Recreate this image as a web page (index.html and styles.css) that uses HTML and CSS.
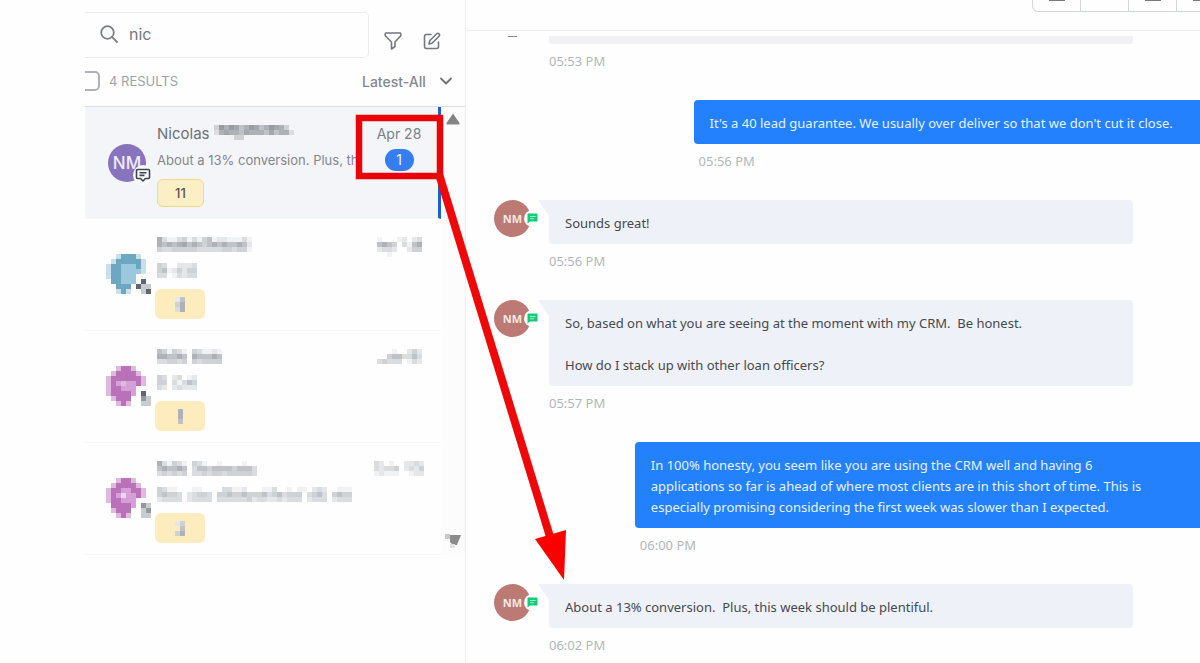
FILE: index.html
```
<!DOCTYPE html>
<html lang="en">
<head>
<meta charset="utf-8">
<title>Conversations</title>
<link rel="stylesheet" href="styles.css">
</head>
<body>
<div class="app">
  <aside class="sidebar">
    <div class="search-row">
      <label class="search">
        <svg width="20" height="20" viewBox="0 0 20 20" fill="none" stroke="#7c8084" stroke-width="1.8" stroke-linecap="round"><circle cx="8.5" cy="8.5" r="6.3"/><path d="M13.2 13.2L18 18"/></svg>
        <input type="text" value="nic" aria-label="Search conversations">
      </label>
      <button class="icon-btn" aria-label="Filter"><svg width="20" height="20" viewBox="0 0 20 20" fill="none" stroke="#74787c" stroke-width="1.6" stroke-linejoin="round"><path d="M2.5 2H17.5Q18.3 3.8 17.5 5L12 11V15.5L8.500 18V11L2.500 5Q1.700 3.800 2.500 2Z"/></svg></button>
      <button class="icon-btn" aria-label="New message"><svg width="20" height="20" viewBox="0 0 20 20" fill="none" stroke="#74787c" stroke-width="1.6" stroke-linejoin="round" stroke-linecap="round"><path d="M9 3.500H4.500Q2.500 3.500 2.500 5.500V15.500Q2.500 17.500 4.500 17.500H14.500Q16.500 17.500 16.500 15.500V11"/><path d="M7 13L7.700 9.800L14.700 2.800Q15.800 1.700 17 2.800Q18.200 4 17 5.200L10 12.200Z"/></svg></button>
    </div>
    <div class="results-row">
      <label class="select-all"><input type="checkbox"><span>4 RESULTS</span></label>
      <label class="sort">
        <select aria-label="Sort order"><option>Latest-All</option></select>
        <svg width="14" height="10" viewBox="0 0 14 10" fill="none" stroke="#6e7276" stroke-width="1.8" stroke-linecap="round" stroke-linejoin="round"><path d="M2 2.500L7 7.500L12 2.500"/></svg>
      </label>
    </div>
    <div class="list-area">
      <ul class="list">
        <li class="item item-active">
          <div class="avatar">NM
            <span class="avatar-badge"><svg width="16" height="15" viewBox="0 0 16 15" fill="none" stroke="#3c4450" stroke-width="1.600" stroke-linejoin="round"><path d="M2.500 1.500H13.500Q14.500 1.500 14.500 2.500V9.500Q14.500 10.500 13.500 10.500H10.500L8 13L5.500 10.500H2.500Q1.500 10.500 1.500 9.500V2.500Q1.500 1.500 2.500 1.500ZM4.500 4.700H11.500M4.500 7.400H9.500"/></svg></span>
          </div>
          <div class="item-body">
            <div class="name">Nicolas <span class="mosaic" data-map="4868756875687640|3676657666575663|0001440000000000"></span></div>
            <div class="preview">About a 13% conversion. Plus, thi</div>
            <span class="score">11</span>
          </div>
          <div class="item-meta"><time class="date">Apr 28</time><span class="unread">1</span></div>
        </li>
        <li class="item">
          <span class="mosaic face" data-map="..caaac..|.caaaaac.|caabbbac.|caabbbbc.|caabbb...|.aabbb.d.|..aaa.dgg|..cac..gd"></span>
          <div class="item-body">
            <div class="name"><span class="mosaic" data-map="63113413145122111310|65656756545656556520|43344444333334434410"></span></div>
            <div class="preview"><span class="mosaic" data-map="43002223|45124244|33013233"></span></div>
            <span class="score score-soft"><span class="mosaic" data-map="25|46|36"></span></span>
          </div>
          <div class="item-meta"><span class="mosaic" data-map="100012023|565403156|233200244|001000000"></span></div>
        </li>
        <li class="item">
          <span class="mosaic face" data-map="..rppr...|.rppppr..|rppppppr.|rpqrqqpr.|rppqqq...|rppppq.d.|.rppp..kg|..rpr..gg"></span>
          <div class="item-body">
            <div class="name"><span class="mosaic" data-map="5414310431121|6655650655565|3344340434444"></span></div>
            <div class="preview"><span class="mosaic" data-map="43023012|44031354|32023222"></span></div>
            <span class="score score-soft"><span class="mosaic" data-map="6|6|5"></span></span>
          </div>
          <div class="item-meta"><span class="mosaic" data-map="000100242|004553353|343330132"></span></div>
        </li>
        <li class="item">
          <span class="mosaic face" data-map="..rppr...|.rppppr..|rppqqppr.|rpqsqqpr.|rppqqq...|.ppppq.kg|.rppp..gk|..rpr..gg"></span>
          <div class="item-body">
            <div class="name"><span class="mosaic" data-map="63143104310010000100|56556503554555545553|34343403343443444443"></span></div>
            <div class="preview wide"><span class="mosaic" data-map="4311000110000331120001130010110232001110|4544302344304454454445345344403453045440|2333302333303333334233223233302333023330"></span></div>
            <span class="score score-soft"><span class="mosaic" data-map="24|05|46"></span></span>
          </div>
          <div class="item-meta"><span class="mosaic" data-map="3201002232|3233402324|1211100122"></span></div>
        </li>
      </ul>
      <div class="scrollbar">
        <svg width="16" height="12" viewBox="0 0 16 12"><path d="M8 0.500L14.500 10Q15 11.500 13.500 11.500H2.500Q1 11.500 1.500 10Z" fill="#858585"/></svg>
        <svg width="18" height="16" viewBox="0 0 18 16"><path d="M1 1H6V6H1Z" fill="#c9c9c9"/><path d="M6 2H17L13 12H9L6 9Z" fill="#8b8b8b"/><path d="M6 11H11V15H6Z" fill="#e2e2e2"/></svg>
      </div>
    </div>
  </aside>

  <main class="chat">
    <header class="chat-head">
      <div class="tools">
        <button aria-label="Archive"><i></i></button><button aria-label="Star"></button><button aria-label="Delete"><i></i></button><button aria-label="More"><i></i></button>
      </div>
    </header>
    <section class="messages">
      <article class="received">
        <div class="avatar-edge"></div>
        <div class="msg"><div class="bubble bubble-cut"></div><time>05:53 PM</time></div>
      </article>
      <article class="sent sent-short"><p class="bubble">It's a 40 lead guarantee. We usually over deliver so that we don't cut it close.</p><time>05:56 PM</time></article>
      <article class="received">
        <div class="sender">NM<span class="sms"><svg width="11" height="11" viewBox="0 0 11 11"><path d="M0.500 0.500H10.500V8.500H3L0.500 10.500Z" fill="#14c978"/><path d="M3 3.500H8.500M3 5.800H7" stroke="#a4efcd" stroke-width="1"/></svg></span></div>
        <div class="msg"><p class="bubble">Sounds great!</p><time>05:56 PM</time></div>
      </article>
      <article class="received">
        <div class="sender">NM<span class="sms"><svg width="11" height="11" viewBox="0 0 11 11"><path d="M0.500 0.500H10.500V8.500H3L0.500 10.500Z" fill="#14c978"/><path d="M3 3.500H8.500M3 5.800H7" stroke="#a4efcd" stroke-width="1"/></svg></span></div>
        <div class="msg"><p class="bubble">So, based on what you are seeing at the moment with my CRM.&nbsp; Be honest.<br><br>How do I stack up with other loan officers?</p><time>05:57 PM</time></div>
      </article>
      <article class="sent sent-long"><p class="bubble">In 100% honesty, you seem like you are using the CRM well and having 6<br>applications so far is ahead of where most clients are in this short of time. This is<br>especially promising considering the first week was slower than I expected.</p><time>06:00 PM</time></article>
      <article class="received">
        <div class="sender">NM<span class="sms"><svg width="11" height="11" viewBox="0 0 11 11"><path d="M0.500 0.500H10.500V8.500H3L0.500 10.500Z" fill="#14c978"/><path d="M3 3.500H8.500M3 5.800H7" stroke="#a4efcd" stroke-width="1"/></svg></span></div>
        <div class="msg"><p class="bubble">About a 13% conversion.&nbsp; Plus, this week should be plentiful.</p><time>06:02 PM</time></div>
      </article>
    </section>
  </main>

  <svg class="annotation" width="600" height="600" viewBox="0 0 600 600" aria-hidden="true">
    <rect x="359" y="118" width="81" height="58" fill="none" stroke="#ea0408" stroke-width="6.500"/>
    <path d="M439 174L551 540" stroke="#ee0808" stroke-width="8" fill="none"/>
    <path d="M535 539L566 530L564 580Z" fill="#fb0000"/>
  </svg>
</div>
<script src="mosaic.js"></script>
</body>
</html>
```

FILE: styles.css
```
* { box-sizing: border-box; }

body {
  margin: 0;
  background: #fefefe;
  color: #44484d;
  font-family: Inter, "Liberation Sans", sans-serif;
  font-size: 14px;
}

button, input, select { font: inherit; color: inherit; }
p { margin: 0; }

.app {
  position: relative;
  display: flex;
  min-height: 100vh;
  overflow: hidden;
}

/* Sidebar */
.sidebar {
  flex: 0 0 466px;
  padding-left: 85px;
  border-right: 1px solid #ebedf0;
}

.search-row {
  display: flex;
  align-items: center;
  padding-top: 12px;
}

.search {
  display: flex;
  align-items: center;
  gap: 10px;
  width: 284px;
  height: 46px;
  padding: 0 0 2px 14px;
  border: 1px solid #e9ebed;
  border-left: 0;
  border-radius: 0 5px 5px 0;
}

.search input {
  width: 200px;
  border: 0;
  padding: 0;
  background: none;
  font-size: 16px;
  color: #74777b;
  outline: none;
}

.icon-btn {
  display: grid;
  place-items: center;
  width: 20px;
  height: 20px;
  margin: 12px 5px 0 14px;
  padding: 0;
  border: 0;
  background: none;
}

.results-row {
  display: flex;
  justify-content: space-between;
  align-items: center;
  height: 48px;
  padding: 0 12px 2px 0;
  overflow: hidden;
}

.select-all {
  display: flex;
  align-items: center;
  gap: 9px;
  color: #a0a3a6;
  font-size: 13px;
}

.select-all input {
  appearance: none;
  width: 20px;
  height: 20px;
  margin: 0 0 0 -5px;
  border: 2px solid #b0b3b6;
  border-radius: 5px;
}

.sort {
  display: flex;
  align-items: center;
  gap: 13px;
  font-weight: 500;
  color: #85888c;
}

.sort select {
  appearance: none;
  border: 0;
  padding: 0;
  background: none;
}

.list-area {
  display: flex;
  border-top: 1px solid #dcdee2;
}

.list {
  flex: 1;
  min-width: 0;
  margin: 0;
  padding: 0;
  list-style: none;
}

.item {
  display: flex;
  height: 112px;
  padding: 17px 11px 0 23px;
  border-bottom: 1px solid #f6f7f8;
}

.item-active {
  background: #f3f5f9;
  border-right: 3px solid #1c5fd4;
  padding-right: 8px;
}

.avatar {
  position: relative;
  width: 38px;
  height: 38px;
  margin-top: 20px;
  border-radius: 50%;
  background: #8874bd;
  color: #f0ebfa;
  font-size: 17px;
  font-weight: 500;
  line-height: 38px;
  text-align: center;
}

.avatar-badge {
  position: absolute;
  right: -7px;
  bottom: -3px;
  display: grid;
  place-items: center;
  width: 20px;
  height: 20px;
  border-radius: 50%;
  background: #fbfcfd;
}

.item-body {
  width: 199px;
  margin-left: 11px;
}

.name {
  height: 20px;
  line-height: 20px;
  font-size: 15px;
  white-space: nowrap;
  color: #6d7175;
}

.preview {
  height: 20px;
  margin-top: 6px;
  line-height: 20px;
  font-size: 13px;
  color: #84878b;
  white-space: nowrap;
  overflow: hidden;
}

.wide { overflow: visible; }

.score {
  display: grid;
  place-items: center;
  width: 47px;
  height: 28px;
  margin-top: 9px;
  border: 1px solid #f3d889;
  border-radius: 6px;
  background: #fcefc6;
  color: #57544c;
  font-size: 13px;
  font-weight: 500;
}

.score-soft {
  width: 50px;
  height: 30px;
  margin: 7px 0 0 -2px;
  border-color: #fcebc0;
  background: #fdecbd;
}

.item-meta {
  display: flex;
  flex-direction: column;
  align-items: center;
  flex: 1;
  gap: 5px;
  padding-left: 12px;
}

.date {
  height: 20px;
  line-height: 20px;
  color: #7c8084;
}

.unread {
  width: 29px;
  height: 22px;
  border-radius: 11px;
  background: #367df0;
  color: #f0f5ff;
  line-height: 22px;
  text-align: center;
}

.mosaic {
  display: inline-block;
  padding-top: 1px;
  vertical-align: top;
  line-height: 0;
}

.face {
  width: 45px;
  height: 40px;
  margin: 17px -5px 0 -2px;
}

.scrollbar {
  display: flex;
  flex-direction: column;
  align-items: center;
  justify-content: space-between;
  width: 24px;
  padding: 6px 0;
  background: #fcfcfc;
}

/* Chat */
.chat {
  flex: 1;
  min-width: 0;
  font-family: "Noto Sans", "Open Sans", sans-serif;
}

.chat-head {
  display: flex;
  justify-content: flex-end;
  height: 31px;
  border-bottom: 1px solid #ebecef;
  overflow: hidden;
}

.tools {
  display: flex;
  height: 12px;
  margin-right: -26px;
  border: 1px solid #d3d6d9;
  border-top: 0;
  border-radius: 0 0 6px 6px;
}

.tools button {
  display: flex;
  justify-content: center;
  align-items: flex-start;
  width: 48px;
  padding: 0;
  border: 0;
  border-right: 1px solid #d3d6d9;
  background: none;
}

.tools i {
  width: 16px;
  height: 1px;
  background: #777b80;
}

.messages {
  display: flex;
  flex-direction: column;
  gap: 28px;
  padding-top: 5px;
}

.received {
  display: flex;
  gap: 18px;
  padding: 0 67px 0 28px;
}

.msg { flex: 1; }

.sender {
  position: relative;
  width: 37px;
  height: 37px;
  border-radius: 50%;
  background: #bd7a74;
  color: #f5e9e7;
  font-size: 11px;
  font-weight: 700;
  line-height: 37px;
  text-align: center;
}

.sms {
  position: absolute;
  right: -10px;
  top: 10px;
  display: grid;
  place-items: center;
  width: 17px;
  height: 17px;
  border-radius: 50%;
  background: #fefefe;
}

.avatar-edge {
  width: 9px;
  height: 1px;
  margin: 0 14px;
  background: #888b8f;
}

.bubble {
  position: relative;
  padding: 13px 16px 10px;
  border-radius: 4px;
  background: #eff1f8;
  color: #46494e;
  font-size: 13px;
  line-height: 21px;
}

.msg p.bubble::before {
  content: "";
  position: absolute;
  left: -11px;
  top: 0;
  width: 15px;
  height: 16px;
  background: #eff1f8;
  clip-path: polygon(0 0, 100% 0, 100% 100%, 11px 100%);
}

.msg .bubble-cut {
  height: 8px;
  padding: 0;
  border-radius: 0 0 4px 4px;
  background: #f1f1f4;
}

.chat time {
  display: block;
  margin-top: 7px;
  margin-bottom: 1px;
  color: #b2b6ba;
  font-size: 13px;
  line-height: 20px;
}

.sent { align-self: flex-end; }
.sent-short { width: 69%; }
.sent-long { width: 77%; }

.sent .bubble {
  border-radius: 4px 0 0 4px;
  background: #2481fe;
  color: #e4f1ff;
  white-space: nowrap;
}

.sent time { margin-left: 5px; }

/* Callout drawn over the panes */
.annotation {
  position: absolute;
  left: 0;
  top: 0;
  pointer-events: none;
}
```

FILE: mosaic.js
```
// Draws pixelated placeholders for redacted names, dates and faces.
const NS = "http://www.w3.org/2000/svg";
const palette = {
  a: "#6ca8c1", b: "#9cc8df", c: "#c9e0e8",
  p: "#b971b8", q: "#d79fd7", r: "#dfb9df", s: "#f0d5f0",
  d: "#62666e", g: "#c9cccf", k: "#92989c"
};
const greys = ["", "#f1f2f3", "#e5e7e9", "#dadddf", "#cfd2d5", "#bfc2c6", "#aeb2b6", "#a4a8ad", "#999da3"];

document.querySelectorAll(".mosaic").forEach((el) => {
  const rows = el.dataset.map.split("|");
  const cell = 5;
  const svg = document.createElementNS(NS, "svg");
  svg.setAttribute("width", rows[0].length * cell);
  svg.setAttribute("height", rows.length * cell);
  rows.forEach((row, y) => [...row].forEach((key, x) => {
    const fill = palette[key] || greys[Number(key)];
    if (!fill) return;
    const rect = document.createElementNS(NS, "rect");
    rect.setAttribute("x", x * cell);
    rect.setAttribute("y", y * cell);
    rect.setAttribute("width", cell);
    rect.setAttribute("height", cell);
    rect.setAttribute("fill", fill);
    svg.append(rect);
  }));
  el.append(svg);
});
```
